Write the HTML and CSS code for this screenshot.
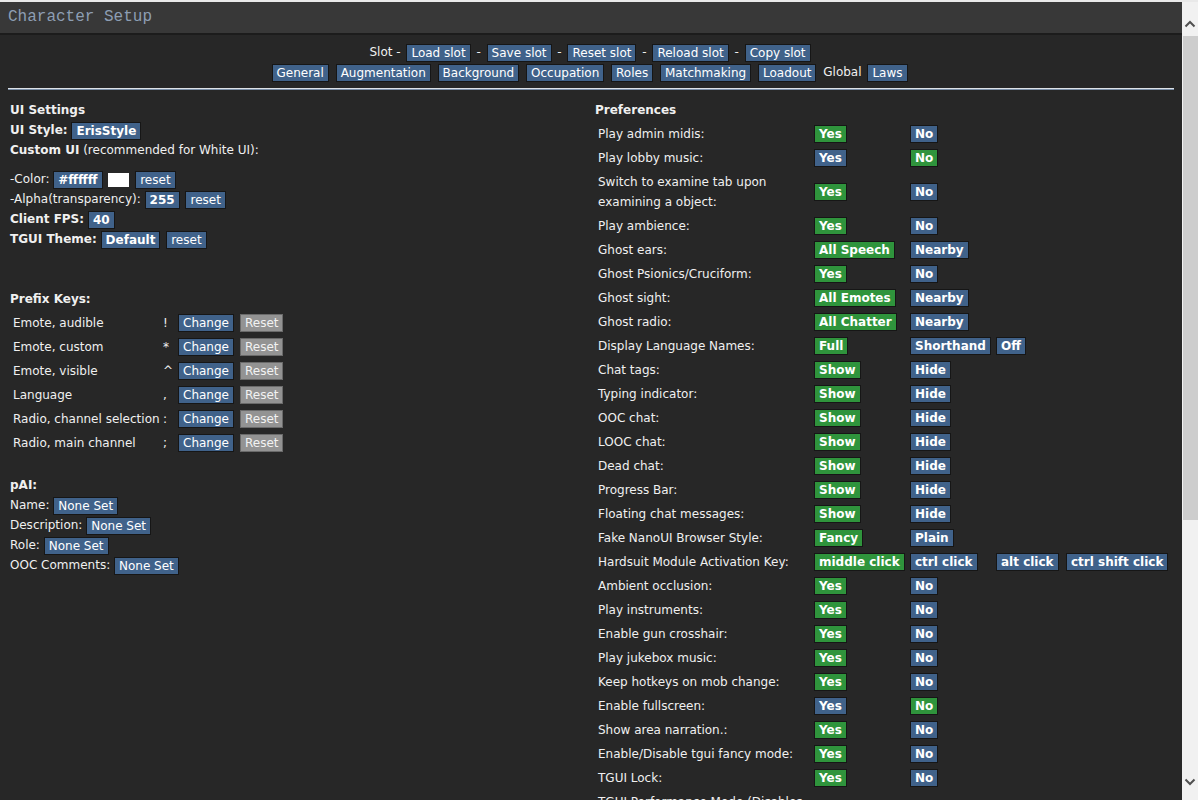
FILE: index.html
```html
<!DOCTYPE html>
<html lang="en">
<head>
<meta charset="utf-8">
<title>Character Setup</title>
<link rel="stylesheet" href="styles.css">
</head>
<body>
<div class="topline"></div>
<div class="window">
  <div class="main">
    <div class="titlebar">Character Setup</div>
    <div class="content">
      <div class="slotbar">
        <div class="bar-line slots">Slot - <a class="btn">Load slot</a> - <a class="btn">Save slot</a> - <a class="btn">Reset slot</a> - <a class="btn">Reload slot</a> - <a class="btn">Copy slot</a></div>
        <div class="bar-line tabs"><a class="btn">General</a> <a class="btn">Augmentation</a> <a class="btn">Background</a> <a class="btn">Occupation</a> <a class="btn">Roles</a> <a class="btn">Matchmaking</a> <a class="btn">Loadout</a> <span class="current">Global</span> <a class="btn">Laws</a></div>
      </div>
      <hr class="sep">
      <div class="columns">
        <div class="col-left">
          <div class="line"><b>UI Settings</b></div>
          <div class="line"><b>UI Style:</b> <a class="btn b">ErisStyle</a></div>
          <div class="line"><b>Custom UI</b> (recommended for White UI):</div>
          <div class="line gap-top">-Color: <a class="btn b">#ffffff</a> <span class="swatch"></span> <a class="btn">reset</a></div>
          <div class="line">-Alpha(transparency): <a class="btn b">255</a> <a class="btn">reset</a></div>
          <div class="line"><b>Client FPS:</b> <a class="btn b">40</a></div>
          <div class="line"><b>TGUI Theme:</b> <a class="btn b">Default</a> <a class="btn">reset</a></div>

          <div class="line section-prefix"><b>Prefix Keys:</b></div>
          <div class="prefix">
            <div class="pk-label">Emote, audible</div><div class="pk-char">!</div><div class="pk-btn"><a class="btn change">Change</a></div><div class="pk-btn"><a class="btn off">Reset</a></div>
            <div class="pk-label">Emote, custom</div><div class="pk-char">*</div><div class="pk-btn"><a class="btn change">Change</a></div><div class="pk-btn"><a class="btn off">Reset</a></div>
            <div class="pk-label">Emote, visible</div><div class="pk-char">^</div><div class="pk-btn"><a class="btn change">Change</a></div><div class="pk-btn"><a class="btn off">Reset</a></div>
            <div class="pk-label">Language</div><div class="pk-char">,</div><div class="pk-btn"><a class="btn change">Change</a></div><div class="pk-btn"><a class="btn off">Reset</a></div>
            <div class="pk-label">Radio, channel selection</div><div class="pk-char">:</div><div class="pk-btn"><a class="btn change">Change</a></div><div class="pk-btn"><a class="btn off">Reset</a></div>
            <div class="pk-label">Radio, main channel</div><div class="pk-char">;</div><div class="pk-btn"><a class="btn change">Change</a></div><div class="pk-btn"><a class="btn off">Reset</a></div>
          </div>

          <div class="line section-pai"><b>pAI:</b></div>
          <div class="line">Name: <a class="btn">None Set</a></div>
          <div class="line">Description: <a class="btn">None Set</a></div>
          <div class="line">Role: <a class="btn">None Set</a></div>
          <div class="line">OOC Comments: <a class="btn">None Set</a></div>
        </div>

        <div class="col-right">
          <div class="line pref-title"><b>Preferences</b></div>
          <div class="pref">
            <div class="row"><div class="lbl">Play admin midis:</div><div class="c"><a class="btn b on">Yes</a></div><div class="c"><a class="btn b">No</a></div></div>
            <div class="row"><div class="lbl">Play lobby music:</div><div class="c"><a class="btn b">Yes</a></div><div class="c"><a class="btn b on">No</a></div></div>
            <div class="row"><div class="lbl">Switch to examine tab upon examining a object:</div><div class="c"><a class="btn b on">Yes</a></div><div class="c"><a class="btn b">No</a></div></div>
            <div class="row"><div class="lbl">Play ambience:</div><div class="c"><a class="btn b on">Yes</a></div><div class="c"><a class="btn b">No</a></div></div>
            <div class="row"><div class="lbl">Ghost ears:</div><div class="c"><a class="btn b on">All Speech</a></div><div class="c"><a class="btn b">Nearby</a></div></div>
            <div class="row"><div class="lbl">Ghost Psionics/Cruciform:</div><div class="c"><a class="btn b on">Yes</a></div><div class="c"><a class="btn b">No</a></div></div>
            <div class="row"><div class="lbl">Ghost sight:</div><div class="c"><a class="btn b on">All Emotes</a></div><div class="c"><a class="btn b">Nearby</a></div></div>
            <div class="row"><div class="lbl">Ghost radio:</div><div class="c"><a class="btn b on">All Chatter</a></div><div class="c"><a class="btn b">Nearby</a></div></div>
            <div class="row"><div class="lbl">Display Language Names:</div><div class="c"><a class="btn b on">Full</a></div><div class="c"><a class="btn b">Shorthand</a></div><div class="c"><a class="btn b">Off</a></div></div>
            <div class="row"><div class="lbl">Chat tags:</div><div class="c"><a class="btn b on">Show</a></div><div class="c"><a class="btn b">Hide</a></div></div>
            <div class="row"><div class="lbl">Typing indicator:</div><div class="c"><a class="btn b on">Show</a></div><div class="c"><a class="btn b">Hide</a></div></div>
            <div class="row"><div class="lbl">OOC chat:</div><div class="c"><a class="btn b on">Show</a></div><div class="c"><a class="btn b">Hide</a></div></div>
            <div class="row"><div class="lbl">LOOC chat:</div><div class="c"><a class="btn b on">Show</a></div><div class="c"><a class="btn b">Hide</a></div></div>
            <div class="row"><div class="lbl">Dead chat:</div><div class="c"><a class="btn b on">Show</a></div><div class="c"><a class="btn b">Hide</a></div></div>
            <div class="row"><div class="lbl">Progress Bar:</div><div class="c"><a class="btn b on">Show</a></div><div class="c"><a class="btn b">Hide</a></div></div>
            <div class="row"><div class="lbl">Floating chat messages:</div><div class="c"><a class="btn b on">Show</a></div><div class="c"><a class="btn b">Hide</a></div></div>
            <div class="row"><div class="lbl">Fake NanoUI Browser Style:</div><div class="c"><a class="btn b on">Fancy</a></div><div class="c"><a class="btn b">Plain</a></div></div>
            <div class="row"><div class="lbl">Hardsuit Module Activation Key:</div><div class="c"><a class="btn b on">middle click</a></div><div class="c"><a class="btn b">ctrl click</a></div><div class="c"><a class="btn b">alt click</a></div><div class="c"><a class="btn b">ctrl shift click</a></div></div>
            <div class="row"><div class="lbl">Ambient occlusion:</div><div class="c"><a class="btn b on">Yes</a></div><div class="c"><a class="btn b">No</a></div></div>
            <div class="row"><div class="lbl">Play instruments:</div><div class="c"><a class="btn b on">Yes</a></div><div class="c"><a class="btn b">No</a></div></div>
            <div class="row"><div class="lbl">Enable gun crosshair:</div><div class="c"><a class="btn b on">Yes</a></div><div class="c"><a class="btn b">No</a></div></div>
            <div class="row"><div class="lbl">Play jukebox music:</div><div class="c"><a class="btn b on">Yes</a></div><div class="c"><a class="btn b">No</a></div></div>
            <div class="row"><div class="lbl">Keep hotkeys on mob change:</div><div class="c"><a class="btn b on">Yes</a></div><div class="c"><a class="btn b">No</a></div></div>
            <div class="row"><div class="lbl">Enable fullscreen:</div><div class="c"><a class="btn b">Yes</a></div><div class="c"><a class="btn b on">No</a></div></div>
            <div class="row"><div class="lbl">Show area narration.:</div><div class="c"><a class="btn b on">Yes</a></div><div class="c"><a class="btn b">No</a></div></div>
            <div class="row"><div class="lbl">Enable/Disable tgui fancy mode:</div><div class="c"><a class="btn b on">Yes</a></div><div class="c"><a class="btn b">No</a></div></div>
            <div class="row"><div class="lbl">TGUI Lock:</div><div class="c"><a class="btn b on">Yes</a></div><div class="c"><a class="btn b">No</a></div></div>
            <div class="row"><div class="lbl">TGUI Performance Mode (Disables fancy effects):</div><div class="c"><a class="btn b">Yes</a></div><div class="c"><a class="btn b on">No</a></div></div>
          </div>
        </div>
      </div>
    </div>
  </div>
  <div class="scrollbar">
    <div class="sb-up"><svg width="16" height="16" viewBox="0 0 16 16"><path d="M3.5 10.5 L8 6 L12.5 10.5" fill="none" stroke="#505050" stroke-width="2"/></svg></div>
    <div class="sb-thumb"></div>
    <div class="sb-track"></div>
    <div class="sb-down"><svg width="16" height="16" viewBox="0 0 16 16"><path d="M3.5 5.5 L8 10 L12.5 5.5" fill="none" stroke="#505050" stroke-width="2"/></svg></div>
  </div>
</div>
</body>
</html>
```
FILE: styles.css
```css
* { box-sizing: border-box; }
html, body { margin: 0; padding: 0; }
body {
  width: 1198px;
  height: 800px;
  overflow: hidden;
  background: #272727;
  font-family: "DejaVu Sans", Verdana, sans-serif;
  font-size: 12px;
  color: #f0f0f0;
}
.topline { height: 2px; background: #e9e9e9; }
.window { display: flex; height: 798px; }
.main { flex: 1; min-width: 0; overflow: hidden; background: #272727; }

.titlebar {
  height: 33px;
  background: #383838;
  border-bottom: 2px solid #1c1c1c;
  font-family: "Liberation Mono", monospace;
  font-size: 16px;
  line-height: 31px;
  color: #8d9eb3;
  padding-left: 8px;
}

.content { padding: 7px 8px 0; }

.slotbar { text-align: center; line-height: 20px; white-space: nowrap; }
.slots .btn { margin: 0 2px; }
.tabs .btn { margin-right: 3px; }
.current { margin-right: 2px; }

.btn {
  display: inline-block;
  background: #40628a;
  color: #ffffff;
  border: 1px solid #161616;
  padding: 1px 4px;
  line-height: 14px;
  margin-right: 2px;
  vertical-align: middle;
  text-decoration: none;
  white-space: nowrap;
}
.btn.b { font-weight: bold; }
.btn.on { background: #2f943c; }
.btn.off { background: #939393; color: #f2f2f2; border-color: #6a6a6a; }

.sep {
  border: 0;
  border-top: 1px solid #dde2e8;
  border-bottom: 1px solid #7a8ea8;
  height: 2px;
  margin: 6px 0 0;
}

.columns { display: grid; grid-template-columns: 1fr 1fr; margin-top: 10px; }
.col-left { padding-left: 2px; }
.col-right { padding-left: 4px; }

.line { line-height: 20px; white-space: nowrap; }
.gap-top { margin-top: 9px; }
.swatch {
  display: inline-block;
  width: 21px;
  height: 14px;
  background: #ffffff;
  vertical-align: middle;
  margin-right: 2px;
}

.section-prefix { margin-top: 40px; }
.prefix {
  display: grid;
  grid-template-columns: 152px 14px max-content max-content;
  margin-top: 1px;
}
.prefix > div { height: 24px; display: flex; align-items: center; white-space: nowrap; padding-top: 1px; }
.pk-label { padding-left: 3px; }
.pk-char { padding-left: 1px; }
.pk-btn .change { margin-left: 2px; }
.pk-btn .off { margin-left: 4px; }

.section-pai { margin-top: 21px; }

.pref-title { margin-bottom: 1px; }
.row {
  display: grid;
  grid-template-columns: 217px 96px 86px 70px auto;
  align-items: center;
  min-height: 24px;
}
.lbl { padding: 3px 3px 1px; line-height: 20px; }
.c { padding: 2px; line-height: 20px; white-space: nowrap; }

.scrollbar {
  width: 16px;
  flex-shrink: 0;
  background: #f1f1f1;
  display: flex;
  flex-direction: column;
}
.sb-up {
  height: 32px;
  display: flex;
  align-items: flex-end;
  justify-content: center;
  padding-bottom: 2px;
}
.sb-thumb { height: 484px; margin: 2px 0 0 1px; background: #cdcdcd; }
.sb-track { flex: 1; }
.sb-down { height: 28px; display: flex; justify-content: center; padding-top: 2px; }
```
